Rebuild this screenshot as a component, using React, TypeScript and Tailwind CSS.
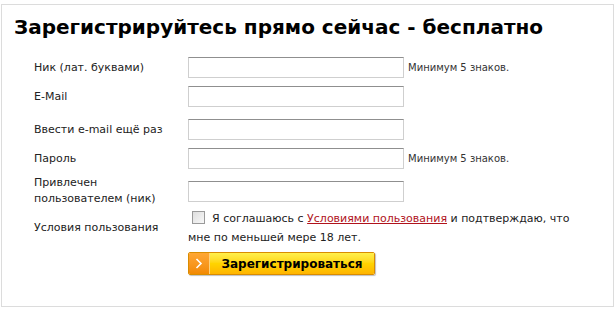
const font = { fontFamily: 'Verdana, "DejaVu Sans", sans-serif' }

function Field({ hint }: { hint?: string }) {
  return (
    <div className="flex items-center">
      <div className="w-[216px] h-[21px] border border-[#cfcfcf] border-t-[#8f8f8f] bg-white" />
      {hint && <span className="ml-[4px] text-[10px] text-[#333]">{hint}</span>}
    </div>
  )
}

function Row({ label, hint, className }: { label: React.ReactNode; hint?: string; className?: string }) {
  return (
    <div className={`flex items-center ${className ?? ''}`}>
      <div className="w-[154px] text-[11px] leading-[16px] text-[#222]">{label}</div>
      <Field hint={hint} />
    </div>
  )
}

export default function App() {
  return (
    <div className="w-[615px] h-[309px] bg-white pt-[4px] px-[1px]" style={font}>
      <div className="h-[303px] border border-[#dcdcdc] pl-[32px]">
        <h1 className="-ml-[20px] pt-[10px] text-[20px] leading-[24px] font-bold text-black">
          Зарегистрируйтесь прямо сейчас - бесплатно
        </h1>

        <Row className="mt-[18px]" label="Ник (лат. буквами)" hint="Минимум 5 знаков." />
        <Row className="mt-[8px]" label="E-Mail" />
        <Row className="mt-[12px]" label="Ввести e-mail ещё раз" />
        <Row className="mt-[8px]" label="Пароль" hint="Минимум 5 знаков." />
        <Row
          className="mt-[6px]"
          label={
            <>
              Привлечен
              <br />
              пользователем (ник)
            </>
          }
        />

        <div className="flex items-center mt-[2px]">
          <div className="w-[154px] text-[11px] text-[#222]">Условия пользования</div>
          <p className="w-[400px] text-[11px] leading-[19px] text-[#222]">
            <span className="inline-block align-[-2px] ml-[4px] mr-[7px] w-[13px] h-[13px] border border-[#9a9a9a] bg-gradient-to-br from-[#dedede] to-[#f8f8f8]" />
            Я соглашаюсь с{' '}
            <a href="#" className="text-[#b0121b] underline">
              Условиями пользования
            </a>{' '}
            и подтверждаю, что мне по меньшей мере 18 лет.
          </p>
        </div>

        <div className="flex mt-[5px] ml-[154px]">
          <button className="flex h-[23px] w-[187px] rounded-[2px] border border-[#d98c00] shadow-[1px_1px_1px_rgba(0,0,0,0.25)] overflow-hidden">
            <span className="flex items-center justify-center w-[21px] h-full bg-gradient-to-b from-[#ffa733] to-[#f28a00] border-r border-[#ffd27a]">
              <svg width="8" height="11" viewBox="0 0 8 11">
                <polyline points="1.5,1 6,5.5 1.5,10" fill="none" stroke="#fff" strokeWidth="1.6" />
              </svg>
            </span>
            <span className="flex-1 flex items-center justify-center h-full bg-gradient-to-b from-[#fff04a] via-[#ffd400] to-[#ffb400] text-[12px] font-bold text-black">
              Зарегистрироваться
            </span>
          </button>
        </div>
      </div>
    </div>
  )
}
